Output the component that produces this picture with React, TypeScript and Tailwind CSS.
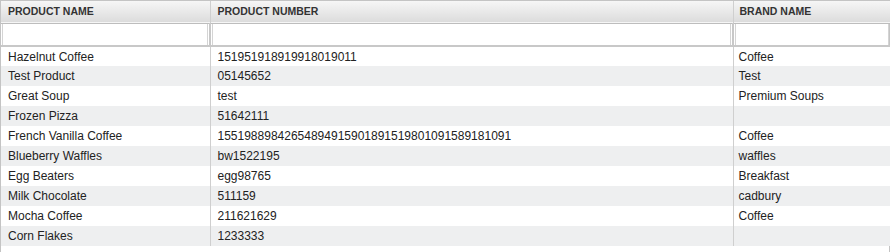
import React from 'react';

type Product = { name: string; number: string; brand: string };

const products: Product[] = [
  { name: 'Hazelnut Coffee', number: '151951918919918019011', brand: 'Coffee' },
  { name: 'Test Product', number: '05145652', brand: 'Test' },
  { name: 'Great Soup', number: 'test', brand: 'Premium Soups' },
  { name: 'Frozen Pizza', number: '51642111', brand: '' },
  { name: 'French Vanilla Coffee', number: '15519889842654894915901891519801091589181091', brand: 'Coffee' },
  { name: 'Blueberry Waffles', number: 'bw1522195', brand: 'waffles' },
  { name: 'Egg Beaters', number: 'egg98765', brand: 'Breakfast' },
  { name: 'Milk Chocolate', number: '511159', brand: 'cadbury' },
  { name: 'Mocha Coffee', number: '211621629', brand: 'Coffee' },
  { name: 'Corn Flakes', number: '1233333', brand: '' },
];

const columns = [
  { label: 'Product Name', width: 'w-[209px]', pad: 'pl-[7px]' },
  { label: 'Product Number', width: 'w-[523px]', pad: 'pl-[7px]' },
  { label: 'Brand Name', width: 'w-[157px]', pad: 'pl-[6px]' },
];

export default function App() {
  return (
    <div className="w-[890px] h-[252px] bg-white border-x border-t border-[#c4c4c4] font-['Liberation_Sans',Arial,sans-serif] text-[12px] text-[#222]">
      <table className="w-[888px] table-fixed border-collapse">
        <thead>
          <tr className="h-[22px] bg-gradient-to-b from-[#f6f6f6] to-[#dcdcdc] border-b border-[#bdbdbd]">
            {columns.map((c, i) => (
              <th
                key={c.label}
                className={`${c.width} ${c.pad} text-left align-middle text-[10.5px] font-bold uppercase text-[#333] ${i < columns.length - 1 ? 'border-r border-[#cfcfcf]' : ''}`}
              >
                {c.label}
              </th>
            ))}
          </tr>
          <tr className="h-[23px] border-b-2 border-[#c8c8c8]">
            {columns.map((c, i) => (
              <th key={c.label} className={`p-0 ${i < columns.length - 1 ? 'border-r-2 border-[#c8c8c8]' : ''}`}>
                <div className="h-[21px] mx-[1px] bg-white border-x border-[#d4d4d4]" />
              </th>
            ))}
          </tr>
        </thead>
        <tbody>
          {products.map((p, idx) => (
            <tr key={p.name} className={`h-[20px] ${idx % 2 === 1 ? 'bg-[#eeeff0]' : 'bg-white'}`}>
              <td className="pl-[7px] border-r border-[#cfcfcf] whitespace-nowrap">{p.name}</td>
              <td className="pl-[7px] border-r border-[#cfcfcf] whitespace-nowrap">{p.number}</td>
              <td className="pl-[5px] whitespace-nowrap">{p.brand}</td>
            </tr>
          ))}
        </tbody>
      </table>
    </div>
  );
}
